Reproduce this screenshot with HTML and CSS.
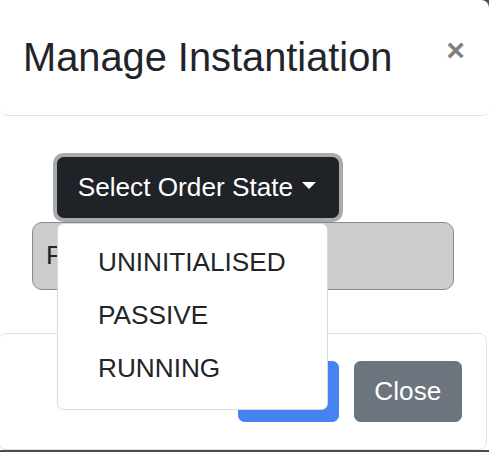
FILE: index.html
```html
<!DOCTYPE html>
<html lang="en">
<head>
<meta charset="utf-8">
<title>Manage Instantiation</title>
<link rel="stylesheet" href="styles.css">
</head>
<body>
<div class="modal">
  <header class="modal-header">
    <h4 class="modal-title">Manage Instantiation</h4>
    <button class="close" type="button" aria-label="Close">×</button>
  </header>
  <div class="modal-body">
    <div class="dropdown">
      <button class="btn btn-dark dropdown-toggle" type="button">Select Order State</button>
      <div class="dropdown-menu">
        <a class="dropdown-item">UNINITIALISED</a>
        <a class="dropdown-item">PASSIVE</a>
        <a class="dropdown-item">RUNNING</a>
      </div>
    </div>
    <input class="state-input" type="text" value="PASSIVE" readonly>
  </div>
  <footer class="modal-footer">
    <button class="btn btn-primary" type="button">Save</button>
    <button class="btn btn-secondary" type="button">Close</button>
  </footer>
</div>
</body>
</html>
```

FILE: styles.css
```css
html, body {
  margin: 0;
  padding: 0;
}

body {
  background: #4d4d4d;
  font-family: "Liberation Sans", Arial, sans-serif;
  color: #212529;
  width: 489px;
  height: 452px;
  overflow: hidden;
}

.modal {
  width: 489px;
  height: 450px;
  background: #fff;
  border-top-right-radius: 8px;
  overflow: hidden;
}

.modal-header {
  box-sizing: border-box;
  height: 116px;
  display: flex;
  align-items: flex-start;
  padding: 28px 24px 0 23px;
  border-bottom: 1px solid #dee2e6;
  border-bottom-left-radius: 8px;
  border-bottom-right-radius: 8px;
}

.modal-title {
  margin: 0;
  font-size: 39.8px;
  line-height: 59px;
  font-weight: 500;
  color: #212529;
}

.close {
  margin-left: auto;
  margin-top: 6px;
  background: none;
  border: 0;
  padding: 0;
  font-family: "Liberation Sans", Arial, sans-serif;
  font-weight: 700;
  font-size: 32px;
  line-height: 1;
  color: #000;
  opacity: 0.5;
}

.modal-body {
  box-sizing: border-box;
  height: 217px;
  padding: 41px 0 0 0;
}

.dropdown {
  position: relative;
  display: inline-block;
  margin-left: 57px;
}

.btn {
  font-family: "Liberation Sans", Arial, sans-serif;
  font-size: 26.2px;
  line-height: 39.3px;
  font-weight: 400;
  padding: 9.8px 19.7px;
  border: 1.6px solid transparent;
  border-radius: 6.5px;
  color: #fff;
  display: inline-block;
  white-space: nowrap;
}

.btn-dark {
  background: #1f2226;
  border-color: #1f2226;
  box-shadow: 0 0 0 4px rgba(82, 88, 93, 0.5);
  padding-right: 22px;
}

.dropdown-toggle::after {
  content: "";
  display: inline-block;
  margin-left: 9px;
  vertical-align: 0.255em;
  border-top: 0.3em solid;
  border-right: 0.3em solid transparent;
  border-left: 0.3em solid transparent;
  border-bottom: 0;
}

.dropdown-menu {
  position: absolute;
  z-index: 10;
  top: 100%;
  left: 0;
  margin-top: 5px;
  background: #fff;
  border: 1px solid rgba(0, 0, 0, 0.15);
  border-radius: 6.5px;
  padding: 12px 0 14px;
  display: flex;
  flex-direction: column;
}

.dropdown-item {
  display: block;
  padding: 6.5px 41px 6.5px 40px;
  font-size: 26.2px;
  line-height: 40px;
  color: #212529;
  white-space: nowrap;
}

.state-input {
  display: block;
  box-sizing: border-box;
  margin: 4px 0 0 32px;
  width: 422px;
  height: 68px;
  padding: 0 13px;
  font-family: "Liberation Sans", Arial, sans-serif;
  font-size: 26.2px;
  color: #212529;
  background: #cccccc;
  border: 1px solid #8a8a8a;
  border-radius: 10px;
  outline: none;
}

.modal-footer {
  box-sizing: border-box;
  height: 117px;
  margin: 0 2px 0 -2px;
  display: flex;
  justify-content: flex-end;
  align-items: flex-start;
  gap: 15px;
  padding: 27px 24px 0;
  border: 1px solid #dee2e6;
  border-radius: 8px;
}

.btn-primary {
  background: #4582f2;
  border-color: #4582f2;
}

.btn-secondary {
  background: #6c757d;
  border-color: #6c757d;
}
```
